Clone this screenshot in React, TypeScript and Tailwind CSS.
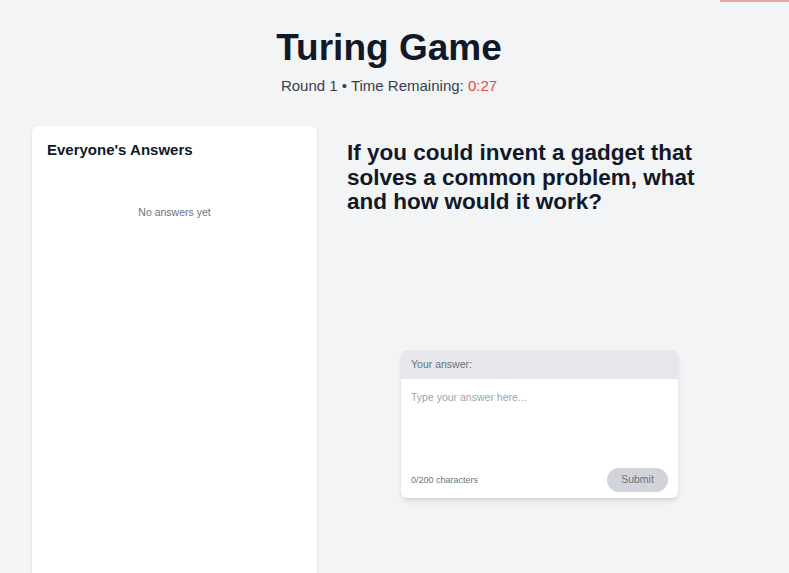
import React from "react";

export default function App() {
  return (
    <div
      className="relative h-screen w-full overflow-hidden bg-[#f3f4f6]"
      style={{ fontFamily: '"Liberation Sans", Arial, sans-serif' }}
    >
      <div className="absolute right-0 top-0 h-[2px] w-[69px] bg-[#e9a3a3]" />
      <div className="px-8 pt-[28px]">
        <div className="mr-[11px]">
          <h1 className="text-center text-[37px] font-bold leading-[40px] text-[#111827]">
            Turing Game
          </h1>
          <p className="mt-[8px] text-center text-[15px] leading-[20px] text-[#374151]">
            Round 1 • Time Remaining: <span className="text-[#ef4444]">0:27</span>
          </p>
        </div>
        <div className="mt-[30px] flex">
          <div className="h-[480px] w-[285px] shrink-0 rounded-md bg-white px-[15px] pt-[14px] shadow-sm">
            <h2 className="text-[15px] font-bold leading-[20px] text-[#111827]">
              Everyone's Answers
            </h2>
            <p className="mt-[45px] text-center text-[10.5px] leading-[15px] text-[#6b7280]">
              No answers yet
            </p>
          </div>
          <div className="ml-[30px] flex-1 pt-[15px]">
            <h2 className="w-[370px] text-[22.5px] font-bold leading-[24.5px] text-[#111827]">
              If you could invent a gadget that solves a common problem, what and how would it work?
            </h2>
            <div className="ml-[54px] mt-[135px] w-[277px] overflow-hidden rounded-md bg-white shadow-md">
              <div className="flex h-[29px] items-center bg-[#e5e7eb] px-[10px] text-[10.5px] leading-[15px] text-[#6b7280]">
                Your answer:
              </div>
              <div className="px-[10px] pb-[6px] pt-[11px]">
                <textarea
                  className="block h-[70px] w-full resize-none border-0 bg-transparent p-0 text-[10.5px] leading-[15px] text-[#374151] outline-none placeholder:text-[#9ca3af]"
                  placeholder="Type your answer here..."
                />
                <div className="mt-[8px] flex h-[24px] items-center justify-between">
                  <span className="text-[9px] leading-[12px] text-[#6b7280]">0/200 characters</span>
                  <button className="h-[24px] w-[61px] rounded-full bg-[#d1d5db] text-[10.5px] leading-[15px] text-[#6b7280]">
                    Submit
                  </button>
                </div>
              </div>
            </div>
          </div>
        </div>
      </div>
    </div>
  );
}
